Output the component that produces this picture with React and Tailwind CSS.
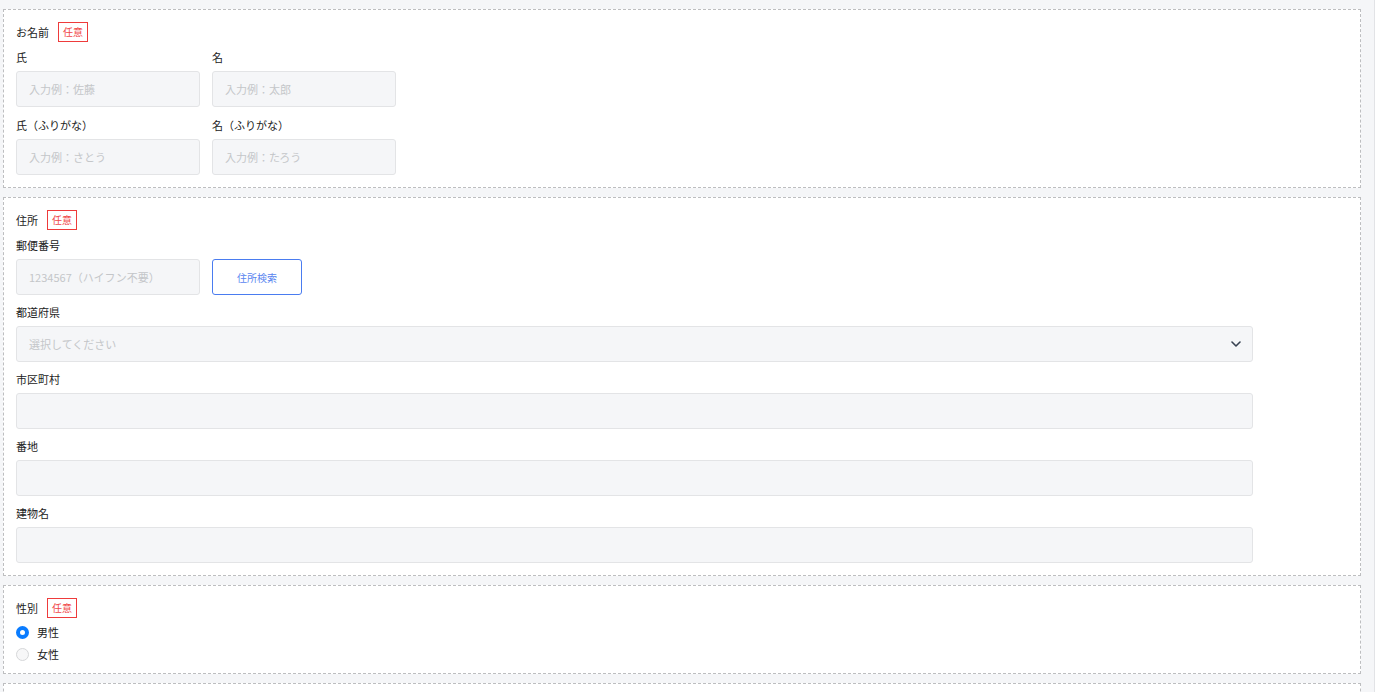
const font = { fontFamily: '"Noto Sans CJK JP", "Noto Sans", sans-serif' };

function Badge() {
  return (
    <span className="ml-[9px] inline-flex h-5 w-[30px] items-center justify-center border border-[#ee3b3b] text-[10px] leading-none text-[#f04848]">
      任意
    </span>
  );
}

function Title({ children }) {
  return (
    <div className="flex h-5 items-center">
      <span className="text-[11px] text-[#222]">{children}</span>
      <Badge />
    </div>
  );
}

function Field({ label, placeholder, className = "", gap = "mt-[7px]" }) {
  return (
    <div className={gap}>
      <div className="mb-1 text-[11px] leading-5 text-[#222]">{label}</div>
      <input
        placeholder={placeholder}
        className={`h-9 rounded-[3px] border border-[#e3e4e6] bg-[#f5f6f8] px-3 text-[11px] text-[#333] outline-none placeholder:text-[#c4c6c9] ${className}`}
      />
    </div>
  );
}

function Panel({ children, className = "" }) {
  return (
    <section className={`border border-dashed border-[#bdbec0] bg-white px-3 pt-3 ${className}`}>
      {children}
    </section>
  );
}

export default function App() {
  return (
    <div className="flex h-[692px] overflow-hidden bg-white" style={font}>
      <div className="flex w-[1375px] shrink-0 flex-col gap-[9px] border-r border-[#e2e3e6] bg-[#f5f6f8] pl-[3px] pr-[13px] pt-[9px]">
        {/* お名前 */}
        <Panel className="pb-3">
          <Title>お名前</Title>
          <div className="flex gap-3">
            <Field gap="mt-[5px]" label="氏" placeholder="入力例：佐藤" className="w-[184px]" />
            <Field gap="mt-[5px]" label="名" placeholder="入力例：太郎" className="w-[184px]" />
          </div>
          <div className="flex gap-3">
            <Field gap="mt-[8px]" label="氏（ふりがな）" placeholder="入力例：さとう" className="w-[184px]" />
            <Field gap="mt-[8px]" label="名（ふりがな）" placeholder="入力例：たろう" className="w-[184px]" />
          </div>
        </Panel>

        {/* 住所 */}
        <Panel className="pb-3">
          <Title>住所</Title>
          <div className="mt-[5px]">
            <div className="mb-1 text-[11px] leading-5 text-[#222]">郵便番号</div>
            <div className="flex gap-3">
              <input
                placeholder="1234567（ハイフン不要）"
                className="h-9 w-[184px] rounded-[3px] border border-[#e3e4e6] bg-[#f5f6f8] px-3 text-[11px] outline-none placeholder:text-[#c4c6c9]"
              />
              <button className="h-9 w-[90px] rounded-[3px] border border-[#4a7cf0] bg-white text-[10px] text-[#5a86f0]">
                住所検索
              </button>
            </div>
          </div>
          <div className="mt-[7px]">
            <div className="mb-1 text-[11px] leading-5 text-[#222]">都道府県</div>
            <div className="flex h-9 w-[1237px] items-center justify-between rounded-[3px] border border-[#e3e4e6] bg-[#f5f6f8] pl-3 pr-[11px]">
              <span className="text-[11px] text-[#c4c6c9]">選択してください</span>
              <svg width="10" height="6" viewBox="0 0 10 6" fill="none">
                <path d="M1 1l4 4 4-4" stroke="#374151" strokeWidth="1.6" strokeLinecap="round" strokeLinejoin="round" />
              </svg>
            </div>
          </div>
          <Field label="市区町村" className="w-[1237px]" />
          <Field label="番地" className="w-[1237px]" />
          <Field label="建物名" className="w-[1237px]" />
        </Panel>

        {/* 性別 */}
        <Panel className="pb-2">
          <Title>性別</Title>
          <div className="mt-[3px]">
            <label className="flex h-[22px] items-center gap-2">
              <span className="h-[13px] w-[13px] rounded-full border-[4px] border-[#0a7cff] bg-white" />
              <span className="text-[11px] text-[#222]">男性</span>
            </label>
            <label className="flex h-[22px] items-center gap-2">
              <span className="h-[13px] w-[13px] rounded-full border border-[#d6d7d9] bg-[#f7f7f8]" />
              <span className="text-[11px] text-[#222]">女性</span>
            </label>
          </div>
        </Panel>

        <Panel className="h-20" />
      </div>
      <div className="flex-1 bg-white" />
    </div>
  );
}
